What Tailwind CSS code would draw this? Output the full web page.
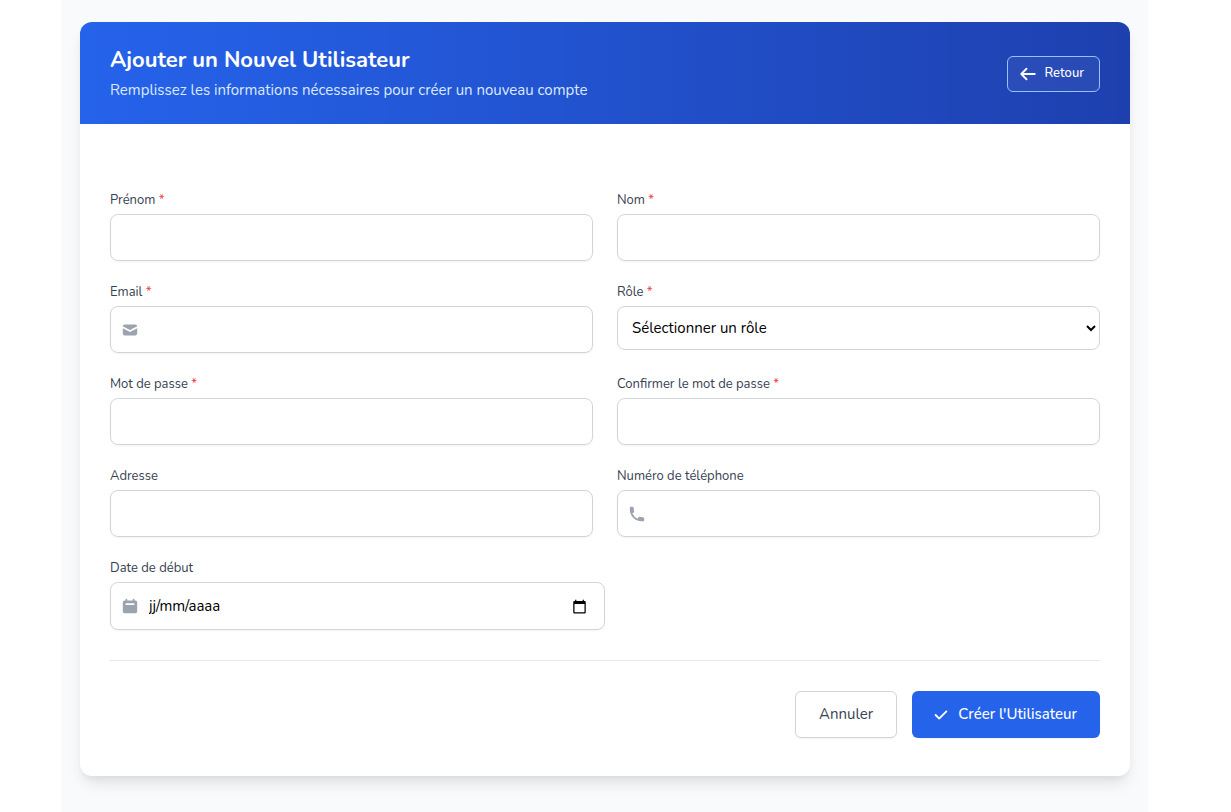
<!DOCTYPE html>
<html lang="fr">
<head>
<meta charset="utf-8">
<meta name="viewport" content="width=device-width, initial-scale=1">
<title>Ajouter un Nouvel Utilisateur</title>
<script src="https://cdn.jsdelivr.net/npm/@tailwindcss/browser@4"></script>
</head>
<body class="bg-white pl-[61px] pr-[83px] font-[Nunito,Lato,sans-serif] text-[15px] text-[#374151]">
<div class="min-h-screen bg-[#f9fafb] pl-[19px] pr-[18px] pt-[22px] pb-9">
  <main class="overflow-hidden rounded-xl bg-white shadow-[0_10px_15px_-3px_rgba(0,0,0,0.1),0_4px_6px_-2px_rgba(0,0,0,0.05)]">
    <header class="flex items-center justify-between bg-linear-to-r/srgb from-[#2563eb] to-[#1e40af] px-[30px] pt-[23px] pb-[22px]">
      <div>
        <h1 class="text-[22px] leading-[30px] font-bold text-white">Ajouter un Nouvel Utilisateur</h1>
        <p class="mt-[3px] leading-6 text-[#dbeafe]">Remplissez les informations nécessaires pour créer un nouveau compte</p>
      </div>
      <a href="#" class="flex h-9 items-center gap-2 rounded-md border border-[#93c5fd] bg-white/5 pl-[11px] pr-[15px] text-[13px] font-medium text-white">
        <svg class="size-[18px]" viewBox="0 0 24 24" fill="none" stroke="currentColor" stroke-width="2.5" stroke-linecap="round" stroke-linejoin="round" aria-hidden="true"><path d="M10 19l-7-7m0 0l7-7m-7 7h18"/></svg>
        Retour
      </a>
    </header>

    <form class="px-[30px] pt-[66px] pb-[38px]">
      <div class="grid grid-cols-2 gap-x-6 gap-y-[21px]">
        <div>
          <label for="prenom" class="mb-1 block text-[13px] leading-5">Prénom <span class="text-[#ef4444]">*</span></label>
          <input id="prenom" type="text" class="block h-[47px] w-full rounded-lg border border-[#d1d5db] px-3 text-black shadow-xs">
        </div>
        <div>
          <label for="nom" class="mb-1 block text-[13px] leading-5">Nom <span class="text-[#ef4444]">*</span></label>
          <input id="nom" type="text" class="block h-[47px] w-full rounded-lg border border-[#d1d5db] px-3 text-black shadow-xs">
        </div>
        <div>
          <label for="email" class="mb-1 block text-[13px] leading-5">Email <span class="text-[#ef4444]">*</span></label>
          <div class="flex h-[47px] items-center gap-2 rounded-lg border border-[#d1d5db] px-[10px] shadow-xs">
            <svg class="size-[18px] shrink-0 text-[#9ca3af]" viewBox="0 0 20 20" fill="currentColor" aria-hidden="true"><path d="M2.003 5.884L10 9.882l7.997-3.998A2 2 0 0016 4H4a2 2 0 00-1.997 1.884z"/><path d="M18 8.118l-8 4-8-4V14a2 2 0 002 2h12a2 2 0 002-2V8.118z"/></svg>
            <input id="email" type="email" class="h-full min-w-0 flex-1 bg-transparent text-black outline-none">
          </div>
        </div>
        <div>
          <label for="role" class="mb-1 block text-[13px] leading-5">Rôle <span class="text-[#ef4444]">*</span></label>
          <select id="role" class="block h-11 w-full rounded-lg border border-[#d1d5db] bg-white px-[10px] text-black">
            <option>Sélectionner un rôle</option>
          </select>
        </div>
        <div>
          <label for="mdp" class="mb-1 block text-[13px] leading-5">Mot de passe <span class="text-[#ef4444]">*</span></label>
          <input id="mdp" type="password" class="block h-[47px] w-full rounded-lg border border-[#d1d5db] px-3 text-black shadow-xs">
        </div>
        <div>
          <label for="mdp2" class="mb-1 block text-[13px] leading-5">Confirmer le mot de passe <span class="text-[#ef4444]">*</span></label>
          <input id="mdp2" type="password" class="block h-[47px] w-full rounded-lg border border-[#d1d5db] px-3 text-black shadow-xs">
        </div>
        <div>
          <label for="adresse" class="mb-1 block text-[13px] leading-5">Adresse</label>
          <input id="adresse" type="text" class="block h-[47px] w-full rounded-lg border border-[#d1d5db] px-3 text-black shadow-xs">
        </div>
        <div>
          <label for="tel" class="mb-1 block text-[13px] leading-5">Numéro de téléphone</label>
          <div class="flex h-[47px] items-center gap-2 rounded-lg border border-[#d1d5db] px-[10px] shadow-xs">
            <svg class="size-[18px] shrink-0 text-[#9ca3af]" viewBox="0 0 20 20" fill="currentColor" aria-hidden="true"><path d="M2 3a1 1 0 011-1h2.153a1 1 0 01.986.836l.74 4.435a1 1 0 01-.54 1.06l-1.548.773a11.037 11.037 0 006.105 6.105l.774-1.548a1 1 0 011.059-.54l4.435.74a1 1 0 01.836.986V17a1 1 0 01-1 1h-2C7.82 18 2 12.18 2 5V3z"/></svg>
            <input id="tel" type="tel" class="h-full min-w-0 flex-1 bg-transparent text-black outline-none">
          </div>
        </div>
      </div>

      <div class="mt-[21px] w-1/2">
        <label for="debut" class="mb-1 block text-[13px] leading-5">Date de début</label>
        <div class="flex h-12 items-center gap-[10px] rounded-lg border border-[#d1d5db] pl-[10px] pr-[17px] shadow-xs">
          <svg class="size-[18px] shrink-0 text-[#9ca3af]" viewBox="0 0 20 20" fill="currentColor" aria-hidden="true"><path fill-rule="evenodd" d="M6 2a1 1 0 00-1 1v1H4a2 2 0 00-2 2v10a2 2 0 002 2h12a2 2 0 002-2V6a2 2 0 00-2-2h-1V3a1 1 0 10-2 0v1H7V3a1 1 0 00-1-1zm0 5a1 1 0 000 2h8a1 1 0 100-2H6z" clip-rule="evenodd"/></svg>
          <input id="debut" type="text" placeholder="jj/mm/aaaa" class="h-full min-w-0 flex-1 bg-transparent text-black outline-none placeholder:text-black">
          <button type="button" aria-label="Ouvrir le calendrier" class="text-black">
            <svg class="size-[15px]" viewBox="0 0 24 24" fill="currentColor" aria-hidden="true"><path d="M20 3h-1V1h-2v2H7V1H5v2H4c-1.100 0-2 .9-2 2v16c0 1.100.9 2 2 2h16c1.100 0 2-.9 2-2V5c0-1.100-.9-2-2-2zm0 18H4V8h16v13z"/></svg>
          </button>
        </div>
      </div>

      <div class="mt-[30px] flex justify-end gap-[15px] border-t border-[#e5e7eb] pt-[30px]">
        <button type="button" class="h-[47px] rounded-md border border-[#d1d5db] bg-white px-[23px] shadow-xs">Annuler</button>
        <button type="submit" class="flex h-[47px] items-center gap-2 rounded-md bg-[#2563eb] pl-5 pr-[23px] font-medium text-white shadow-xs">
          <svg class="size-[18px]" viewBox="0 0 20 20" fill="currentColor" aria-hidden="true"><path fill-rule="evenodd" d="M16.707 5.293a1 1 0 010 1.414l-8 8a1 1 0 01-1.414 0l-4-4a1 1 0 011.414-1.414L8 12.586l7.293-7.293a1 1 0 011.414 0z" clip-rule="evenodd"/></svg>
          Créer l'Utilisateur
        </button>
      </div>
    </form>
  </main>
</div>
</body>
</html>
